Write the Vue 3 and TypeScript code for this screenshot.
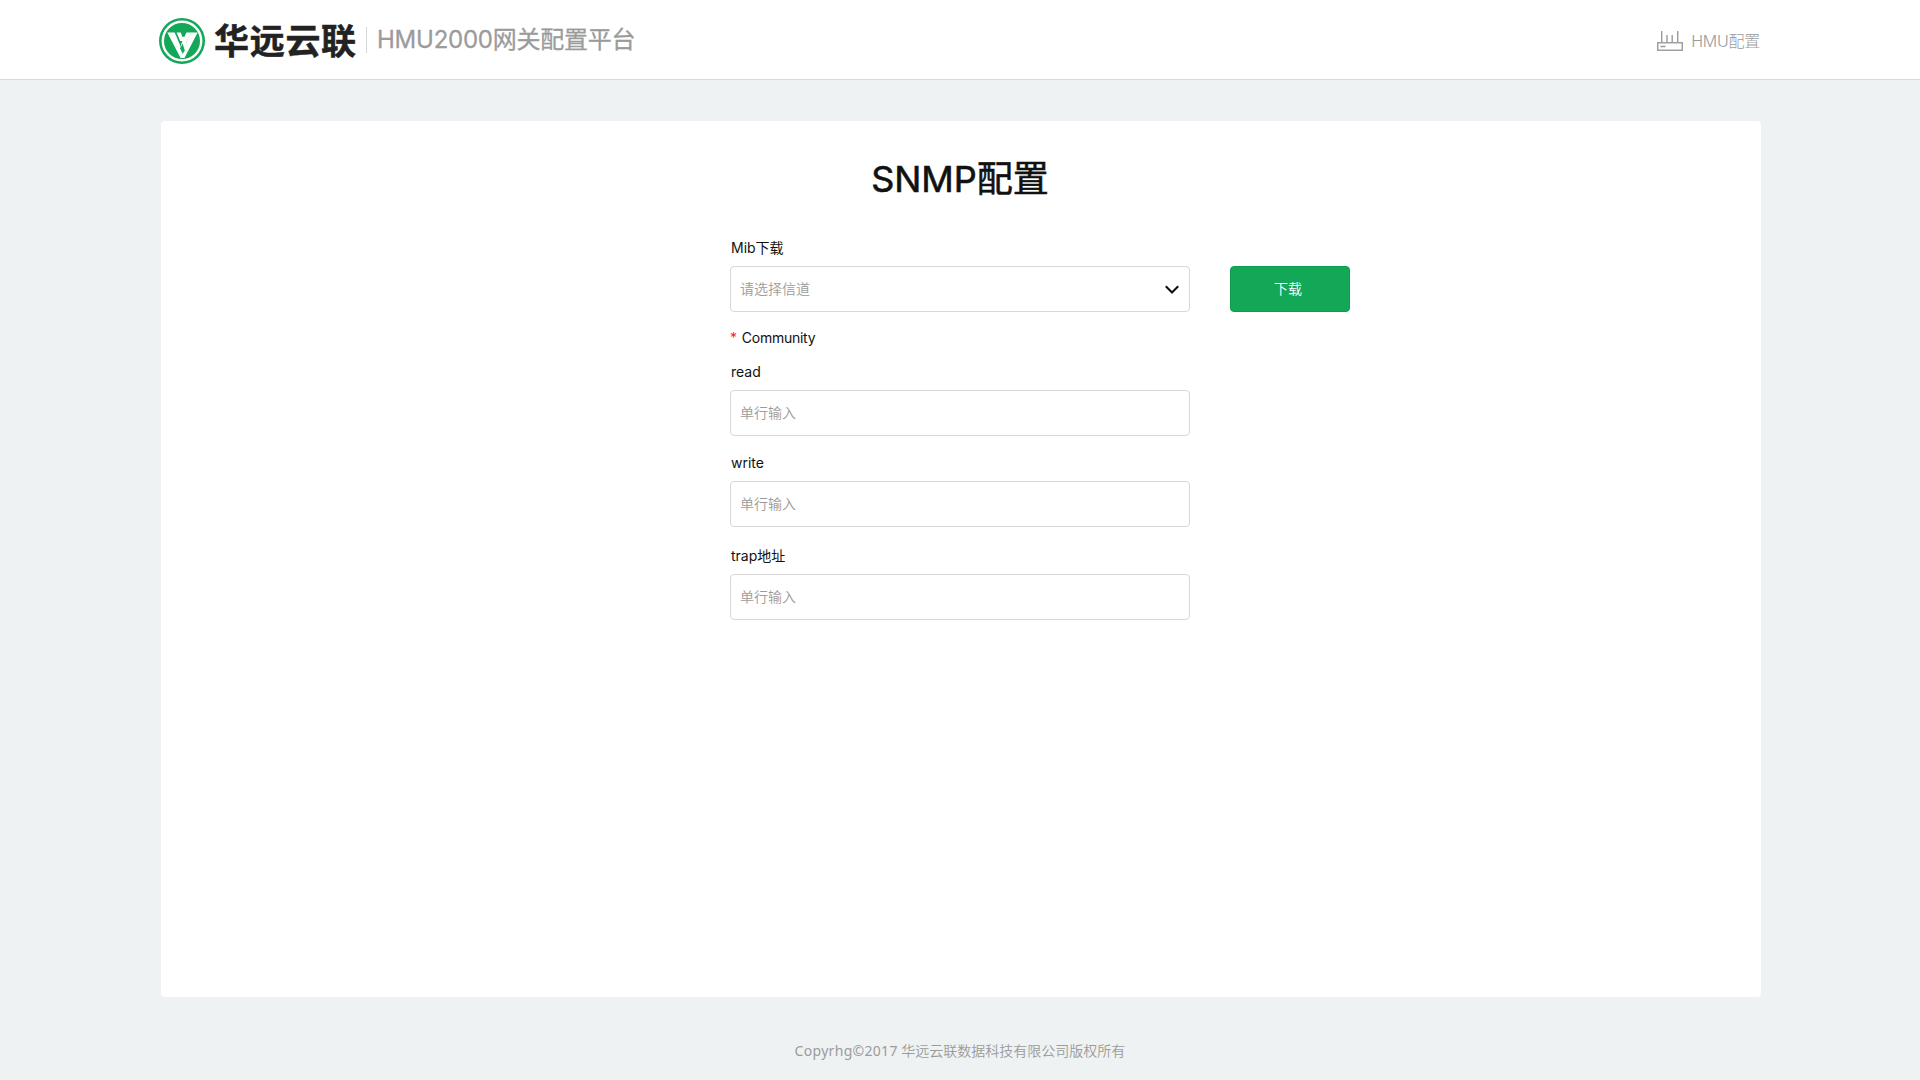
<script setup lang="ts">
import { ref } from 'vue'

interface Field {
  key: string
  label: string
}

const fields: Field[] = [
  { key: 'read', label: 'read' },
  { key: 'write', label: 'write' },
  { key: 'trap', label: 'trap地址' },
]
const values = ref<Record<string, string>>({ read: '', write: '', trap: '' })
</script>

<template>
  <div class="page">
    <header class="header">
      <div class="header-inner">
        <svg class="logo" viewBox="0 0 46 46">
          <circle cx="23" cy="23" r="23" fill="#12a858" />
          <circle cx="23" cy="23" r="19.2" fill="none" stroke="#fff" stroke-width="2.4" />
          <path d="M8.3 14.4h7.4L25 36.5l-1.2 3.5h-2.2z" fill="#fff" />
          <path d="M31.8 14.4h6.9L25.4 40h-3l-.6-3.8z" fill="#fff" />
          <path d="M17.6 14.4h4.2l1.5 4.4h2.1l2-4.4h4.6l-8.2 17.4-2-4.4 1.6-4.4h-2.2z" fill="#fff" />
          <path d="M26.4 22.4l2.4 8.4-2.6 4.6-3-10z" fill="#fff" />
          <path d="M23.6 25.4l2.1 6.9-2 3.6-2.6-5.6z" fill="#12a858" />
        </svg>
        <span class="brand">华远云联</span>
        <i class="divider"></i>
        <span class="product">HMU2000网关配置平台</span>
        <a class="nav">
          <svg class="router" viewBox="0 0 26 22">
            <g fill="none" stroke="#9b9b9b">
              <rect x=".75" y="12.75" width="24.5" height="7.5" stroke-width="1.4" />
              <path d="M4.7 12V1M10 12V5M15.2 12V5M20.7 12V1M3.5 16.5h5" stroke-width="1.4" />
            </g>
          </svg>
          <span class="nav-text">HMU配置</span>
        </a>
      </div>
    </header>

    <main class="card">
      <h1 class="title">SNMP配置</h1>
      <form class="form" @submit.prevent>
        <label class="label">Mib下载</label>
        <div class="row">
          <div class="control select">
            <span>请选择信道</span>
            <svg class="chevron" viewBox="0 0 14 9">
              <path d="M.8 1.2l6.2 6.2 6.2-6.2" fill="none" stroke="#111" stroke-width="2.1" />
            </svg>
          </div>
          <button class="download" type="button">下载</button>
        </div>
        <div class="label community"><span class="star">*</span>Community</div>
        <div v-for="f in fields" :key="f.key" class="field" :class="f.key">
          <label class="label">{{ f.label }}</label>
          <input v-model="values[f.key]" class="control" placeholder="单行输入" />
        </div>
      </form>
    </main>

    <footer class="footer"><span class="latin">Copyrhg©2017</span> 华远云联数据科技有限公司版权所有</footer>
  </div>
</template>

<style>
body {
  background: #eef2f3;
}
</style>

<style scoped>
.page {
  height: 1080px;
  overflow: hidden;
  display: flex;
  flex-direction: column;
  background: #eef2f3;
  font-family: Inter, "Noto Sans CJK SC", sans-serif;
  font-size: 14px;
  color: #111;
}
.header {
  height: 80px;
  box-sizing: border-box;
  background: #fff;
  border-bottom: 1px solid #d8dbdc;
}
.header-inner {
  width: 1601px;
  height: 79px;
  margin: 0 0 0 159px;
  display: flex;
  align-items: center;
}
.logo {
  width: 46px;
  height: 46px;
  margin-top: 3px;
}
.brand {
  width: 144px;
  margin: -2px 0 0 9px;
  font: 700 35px/50px "Noto Sans CJK SC", sans-serif;
  letter-spacing: 0.7px;
  white-space: nowrap;
  color: #222;
  -webkit-text-stroke: 0.5px #222;
}
.divider {
  width: 1px;
  height: 26px;
  margin: 1px 0 0 8px;
  background: #d8d8d8;
}
.product {
  margin-left: 10px;
  font-size: 24px;
  line-height: 36px;
  letter-spacing: -0.25px;
  color: #9b9b9b;
  -webkit-text-stroke: 0.3px #9b9b9b;
  white-space: nowrap;
}
.nav {
  margin-left: auto;
  display: flex;
  align-items: center;
  color: #9b9b9b;
  font-size: 16px;
  line-height: 24px;
  font-weight: 300;
}
.nav-text {
  margin-top: 2px;
  letter-spacing: -0.25px;
}
.router {
  width: 26px;
  height: 22px;
  margin: 2px 8px 0 0;
}
.card {
  width: 1600px;
  height: 876px;
  flex: none;
  margin: 41px 0 0 161px;
  background: #fff;
  border-radius: 4px;
}
.title {
  margin: 0 2px 0 0;
  padding-top: 33px;
  font-size: 36px;
  line-height: 50px;
  font-weight: 400;
  text-align: center;
  -webkit-text-stroke: 0.6px #111;
}
.form {
  width: 620px;
  margin: 34px 0 0 569px;
}
.label {
  display: block;
  height: 20px;
  padding-left: 1px;
  line-height: 20px;
}
.row {
  display: flex;
  gap: 40px;
  margin-top: 8px;
}
.control {
  display: block;
  width: 460px;
  height: 46px;
  box-sizing: border-box;
  padding: 0 10px 2px 9px;
  border: 1px solid #d8d8d8;
  border-radius: 4px;
  background: #fff;
  outline: none;
  font: 350 14px "Noto Sans CJK SC", sans-serif;
  color: #111;
}
.control::placeholder {
  color: #9b9b9b;
  opacity: 1;
}
.select {
  display: flex;
  align-items: center;
  justify-content: space-between;
  color: #9b9b9b;
}
.chevron {
  width: 14px;
  height: 9px;
  margin-top: 2px;
}
.download {
  width: 120px;
  height: 46px;
  padding: 0 4px 2px 0;
  border: 1px solid #0c9f50;
  border-radius: 4px;
  background: #12a858;
  color: #fff;
  font: 350 14px "Noto Sans CJK SC", sans-serif;
}
.community {
  margin-top: 16px;
  padding-left: 0;
  letter-spacing: -0.25px;
}
.star {
  margin-right: 5px;
  color: #f5222d;
}
.field .control {
  margin-top: 8px;
}
.read {
  margin-top: 14px;
}
.write {
  margin-top: 17px;
}
.trap {
  margin-top: 19px;
}
.footer {
  margin-top: 43px;
  text-align: center;
  font: 350 14px/22px "Noto Sans", "Noto Sans CJK SC", sans-serif;
  color: #9b9b9b;
}
.latin {
  font-weight: 400;
  letter-spacing: 0.3px;
}
</style>
